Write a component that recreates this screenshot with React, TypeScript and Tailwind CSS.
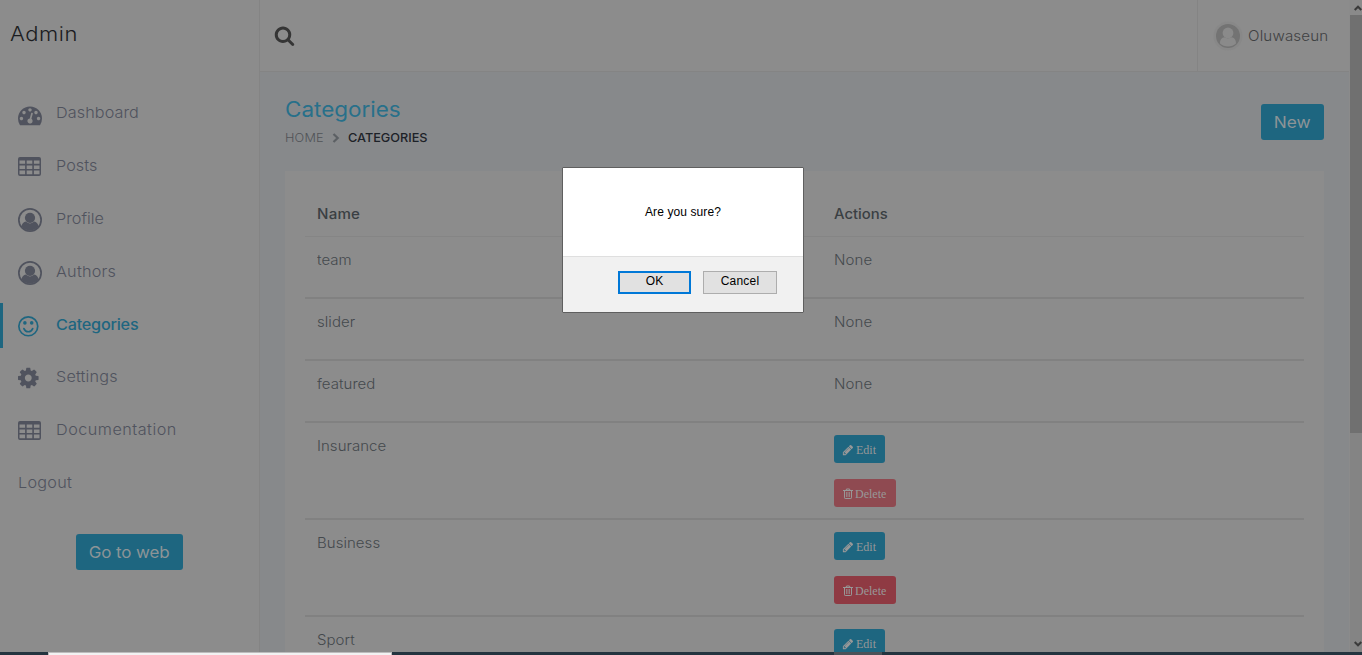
import type { ReactNode } from "react";

const DASH =
  "M384 1152q0-53-37.5-90.5t-90.5-37.5-90.5 37.5-37.5 90.5 37.5 90.5 90.5 37.5 90.5-37.5 37.5-90.5zm192-448q0-53-37.5-90.5t-90.5-37.5-90.5 37.5-37.5 90.5 37.5 90.5 90.5 37.5 90.5-37.5 37.5-90.5zm428 481l101-382q6-26-7.5-48.5t-38.5-29.5-48 6.5-30 39.5l-101 382q-60 5-107 43.5t-63 98.5q-20 77 20 146t117 89 146-20 89-117q16-60-6-117t-72-91zm660-33q0-53-37.5-90.5t-90.5-37.5-90.5 37.5-37.5 90.5 37.5 90.5 90.5 37.5 90.5-37.5 37.5-90.5zm-640-640q0-53-37.5-90.5t-90.5-37.5-90.5 37.5-37.5 90.5 37.5 90.5 90.5 37.5 90.5-37.5 37.5-90.5zm448 192q0-53-37.5-90.5t-90.5-37.5-90.5 37.5-37.5 90.5 37.5 90.5 90.5 37.5 90.5-37.5 37.5-90.5zm320 448q0 261-141 483-19 29-54 29h-1402q-35 0-54-29-141-221-141-483 0-182 71-348t191-286 286-191 348-71 348 71 286 191 191 286 71 348z";
const COG =
  "M1152 896q0-106-75-181t-181-75-181 75-75 181 75 181 181 75 181-75 75-181zm512-109v222q0 12-8 23t-20 13l-185 28q-19 54-39 91 35 50 107 138 10 12 10 25t-9 23q-27 37-99 108t-94 71q-12 0-26-9l-138-108q-44 23-91 38-16 136-29 186-7 28-36 28h-222q-14 0-24.5-8.5t-11.5-21.5l-28-184q-49-16-90-37l-141 107q-10 9-25 9-14 0-25-11-126-114-165-168-7-10-7-23 0-12 8-23 15-21 51-66.5t54-70.5q-27-50-41-99l-183-27q-13-2-21-12.5t-8-23.5v-222q0-12 8-23t19-13l186-28q14-46 39-92-40-57-107-138-10-12-10-24 0-10 9-23 26-36 98.5-107.5t94.5-71.5q13 0 26 10l138 107q44-23 91-38 16-136 29-186 7-28 36-28h222q14 0 24.5 8.5t11.5 21.5l28 184q49 16 90 37l142-107q9-9 24-9 13 0 25 10 129 119 165 170 7 8 7 22 0 12-8 23-15 21-51 66.5t-54 70.5q26 50 41 98l183 28q13 2 21 12.5t8 23.5z";
const SEARCH =
  "M1216 832q0-185-131.5-316.5t-316.5-131.5-316.5 131.5-131.5 316.5 131.5 316.5 316.5 131.5 316.5-131.5 131.5-316.5zm512 832q0 52-38 90t-90 38q-54 0-90-38l-343-342q-179 124-399 124-143 0-273.5-55.5t-225-150-150-225-55.5-273.5 55.5-273.5 150-225 225-150 273.5-55.5 273.5 55.5 225 150 150 225 55.5 273.5q0 220-124 399l343 343q37 37 37 90z";
const PENCIL =
  "M491 1536l91-91-235-235-91 91v107h128v128h107zm523-928q0-22-22-22-10 0-17 7l-542 542q-7 7-7 17 0 22 22 22 10 0 17-7l542-542q7-7 7-17zm-54-192l416 416-832 832h-416v-416zm683 96q0 53-37 90l-166 166-416-416 166-165q36-38 90-38 53 0 91 38l235 234q37 39 37 91z";

function DashIcon() {
  return (
    <svg className="mt-0.5 size-6" viewBox="0 0 1792 1792" fill="currentColor">
      <path d={DASH} />
    </svg>
  );
}

function CogIcon() {
  return (
    <svg className="size-6" viewBox="128 0 1792 1792" fill="currentColor">
      <path d={COG} />
    </svg>
  );
}

function TableIcon() {
  return (
    <svg className="-mt-px size-6" viewBox="0 0 24 24" fill="currentColor">
      <path
        fillRule="evenodd"
        d="M2 3h19a2 2 0 0 1 2 2v15a2 2 0 0 1-2 2H2a2 2 0 0 1-2-2V5a2 2 0 0 1 2-2zM1.500 6.500v3.300h5.600v-3.300zM8.700 6.500v3.300h5.600v-3.300zM15.900 6.500v3.300h5.600v-3.300zM1.500 11.400v3.500h5.600v-3.500zM8.700 11.400v3.500h5.600v-3.500zM15.900 11.400v3.500h5.600v-3.500zM1.500 16.500v3.700h5.600v-3.700zM8.700 16.500v3.700h5.600v-3.700zM15.900 16.500v3.700h5.600v-3.700z"
      />
    </svg>
  );
}

function UserIcon() {
  return (
    <svg className="mt-px size-6" viewBox="0 0 24 24">
      <circle cx="12" cy="12" r="11.15" fill="none" stroke="currentColor" strokeWidth="1.7" />
      <circle cx="12" cy="9.800" r="5.1" fill="currentColor" />
      <path d="M3.6 18.4c.5-3 2-4.5 4.3-4.8 2.5 2.4 5.700 2.400 8.200 0 2.300.3 3.800 1.800 4.300 4.800a10.600 10.600 0 0 1-16.800 0z" fill="currentColor" />
    </svg>
  );
}

function SmileIcon() {
  return (
    <svg className="mt-px size-6" viewBox="0 0 24 24">
      <g fill="none" stroke="currentColor" strokeWidth="1.7">
        <circle cx="10.3" cy="12.300" r="9.45" />
        <path d="M5.900 14.600c1.700 4.200 7.100 4.200 8.800 0" strokeLinecap="round" />
      </g>
      <circle cx="6.900" cy="8.900" r="1.800" fill="currentColor" />
      <circle cx="13.700" cy="8.900" r="1.800" fill="currentColor" />
    </svg>
  );
}

const nav: { label: string; icon: ReactNode; cls: string }[] = [
  { label: "Dashboard", icon: <DashIcon />, cls: "tracking-[0.08px]" },
  { label: "Posts", icon: <TableIcon />, cls: "tracking-[0.05px]" },
  { label: "Profile", icon: <UserIcon />, cls: "tracking-[0.02px]" },
  { label: "Authors", icon: <UserIcon />, cls: "tracking-[0.2px]" },
  { label: "Categories", icon: <SmileIcon />, cls: "tracking-[-0.2px]" },
  { label: "Settings", icon: <CogIcon />, cls: "tracking-[0.15px]" },
  { label: "Documentation", icon: <TableIcon />, cls: "tracking-[0.45px]" },
];

const rows = [
  { name: "team", editable: false, faded: false },
  { name: "slider", editable: false, faded: false },
  { name: "featured", editable: false, faded: false },
  { name: "Insurance", editable: true, faded: true },
  { name: "Business", editable: true, faded: false },
  { name: "Sport", editable: true, faded: false },
];

function Sidebar() {
  return (
    <aside className="w-[260px] shrink-0 border-r border-[#848484] text-[15px] font-light text-[#50535e]">
      <div className="flex h-[68px] items-center pl-2.5 text-[20px] text-[#1b1c1f]">
        <span className="origin-left scale-x-[1.1] tracking-[0.5px]">Admin</span>
      </div>
      <nav className="mt-[23.8px] flex flex-col gap-2">
        {nav.map((n) => {
          const active = n.label === "Categories";
          return (
            <a
              key={n.label}
              className={
                active
                  ? "flex h-[44.8px] items-center border-l-[3px] border-[#1e6680] pl-[15px] font-medium text-[#1e6680]"
                  : "flex h-[44.8px] items-center pl-[18px]"
              }
            >
              {n.icon}
              <span className={"-mt-px ml-3.5 origin-left scale-x-[1.08] " + n.cls}>{n.label}</span>
            </a>
          );
        })}
        <a className="flex h-[44.8px] items-center pl-[18px]">
          <span className="-mt-px origin-left scale-x-[1.08] tracking-[0.25px]">Logout</span>
        </a>
      </nav>
      <div className="mt-7 flex justify-center">
        <button className="flex h-9 w-[107px] items-center justify-center rounded-[3px] bg-[#1e6680] text-[16px] font-normal text-[#8c9497]">
          <span className="scale-x-[1.06] tracking-[-0.1px]">Go to web</span>
        </button>
      </div>
    </aside>
  );
}

function Header() {
  return (
    <header className="flex h-[72px] shrink-0 items-center border-b border-[#848484] bg-[#8c8c8c] pl-[14px]">
      <svg className="size-[21px] text-[#353535]" viewBox="0 0 1792 1792" fill="currentColor">
        <path d={SEARCH} />
      </svg>
      <div className="ml-auto flex h-full w-[153px] items-center border-l border-[#848484] pl-[15px]">
        <svg className="size-[30px] shrink-0" viewBox="0 0 30 30">
          <circle cx="15" cy="15" r="14.500" fill="#888888" />
          <circle cx="15" cy="15" r="12" fill="#737373" />
          <circle cx="15" cy="12" r="5.400" fill="#8a8a8a" />
          <path d="M7 22.500c0-4 2-6 4.400-6.200 2.300 1.500 4.900 1.500 7.200 0 2.400.2 4.400 2.200 4.400 6.200-4 4-12 4-16 0z" fill="#8a8a8a" />
        </svg>
        <span className="ml-[5px] origin-left scale-x-[1.08] text-[14px] font-light tracking-[0.15px] text-[#3f4143]">
          Oluwaseun
        </span>
      </div>
    </header>
  );
}

function Actions({ faded }: { faded: boolean }) {
  return (
    <div className="flex flex-col items-start gap-4 pt-3 font-['Liberation_Serif',serif] text-[12px] text-[#989898]">
      <button className="flex h-7 w-[51px] items-center rounded-[3px] bg-[#1e6680] pt-0.5 pl-2">
        <svg className="mr-0.5 size-3" viewBox="0 0 1792 1792" fill="currentColor">
          <path d={PENCIL} />
        </svg>
        Edit
      </button>
      <button
        className={
          faded
            ? "flex h-7 w-[62px] items-center rounded-[3px] bg-[#8f4a51] pt-0.5 pl-[9px]"
            : "flex h-7 w-[62px] items-center rounded-[3px] bg-[#8f3a43] pt-0.5 pl-[9px]"
        }
      >
        <svg className="-mt-px mr-[2px] h-[11px] w-[10px]" viewBox="0 0 10 11" fill="none" stroke="currentColor">
          <path d="M0 2.500h10M3 2.500l.5-1.500h3l.5 1.500M1.500 2.500v7.300q0 .7.700.7h5.600q.7 0 .7-.7v-7.300" />
          <path d="M3.500 4v5M5 4v5M6.500 4v5" strokeWidth="0.700" />
        </svg>
        Delete
      </button>
    </div>
  );
}

function Content() {
  return (
    <main className="min-h-0 flex-1 overflow-hidden bg-[#87898b] pr-[26px] pl-[25px]">
      <div className="flex h-[99px] justify-between">
        <div className="pt-[23px]">
          <h1 className="w-max origin-left scale-x-[1.07] text-[21px] leading-[30px] font-normal text-[#27708a]">Categories</h1>
          <div className="mt-1 flex h-[18px] items-center text-[12px] leading-[18px]">
            <span className="w-[39px] origin-left scale-x-[1.06] font-light tracking-[0.15px] text-[#505357]">HOME</span>
            <svg className="mx-2 h-[10px] w-2 shrink-0" viewBox="0 0 8 10" fill="none" stroke="#5c6064" strokeWidth="2.200">
              <path d="M1.500 1l4.200 4-4.200 4" />
            </svg>
            <span className="origin-left scale-x-[1.06] font-medium tracking-[-0.03px] text-[#1d2228]">CATEGORIES</span>
          </div>
        </div>
        <button className="mt-8 flex h-9 w-[63px] items-center justify-center rounded-[3px] bg-[#1e6680] text-[16px] text-[#8c9497]">
          <span className="scale-x-[1.08]">New</span>
        </button>
      </div>
      <section className="h-[600px] bg-[#8c8c8c] px-5 pt-5 text-[14px] text-[#44494d]">
        <div className="grid h-[46px] grid-cols-[517px_1fr] items-center border-b border-[#858585] pl-3 font-medium text-[#3a3f43]">
          <span className="w-max origin-left scale-x-[1.08] tracking-[0.2px]">Name</span>
          <span className="w-max origin-left scale-x-[1.06]">Actions</span>
        </div>
        {rows.map((r) => (
          <div
            key={r.name}
            className={
              r.editable
                ? "grid h-[97px] grid-cols-[517px_1fr] border-b-2 border-[#818181] pl-3"
                : "grid h-[62px] grid-cols-[517px_1fr] border-b-2 border-[#818181] pl-3"
            }
          >
            <span className="mt-[13px] h-5 w-max origin-left scale-x-[1.07] leading-5 font-light tracking-[0.05px]">{r.name}</span>
            {r.editable ? (
              <Actions faded={r.faded} />
            ) : (
              <span className="mt-[13px] h-5 w-max origin-left scale-x-[1.07] leading-5 font-light tracking-[0.15px]">None</span>
            )}
          </div>
        ))}
      </section>
    </main>
  );
}

function Scrollbar() {
  return (
    <div className="flex w-[13px] shrink-0 flex-col border-l border-[#8b8b8b] bg-[#848484]">
      <div className="flex h-[15px] items-center justify-end bg-[#8a8a8a]">
        <svg className="h-[6px] w-2" viewBox="0 0 8 6" fill="none" stroke="#3a3a3a" strokeWidth="2">
          <path d="M0.700 5l3.300-3.300L7.300 5" />
        </svg>
      </div>
      <div className="h-[418px] bg-[#707070]" />
      <div className="mt-auto flex h-[17px] items-center justify-end">
        <svg className="h-[6px] w-2" viewBox="0 0 8 6" fill="none" stroke="#3a3a3a" strokeWidth="2">
          <path d="M0.700 1l3.300 3.300L7.300 1" />
        </svg>
      </div>
    </div>
  );
}

function ConfirmDialog() {
  return (
    <div className="absolute top-[167px] left-[562px] flex h-[146px] w-[242px] flex-col rounded-[1px] border border-[#5f5f5f] bg-white font-['Liberation_Sans',sans-serif] text-[12px] text-black">
      <div className="flex h-[88px] items-center justify-center">
        <span className="tracking-[0.1px]">Are you sure?</span>
      </div>
      <div className="flex flex-1 justify-end gap-3 border-t border-[#dfdfdf] bg-[#f1f1f1] pt-[14px] pr-[26px]">
        <button className="h-[23px] w-[73px] border-2 border-[#0078d7] bg-[#e1e1e1] leading-[17px]">
          <span className="block -translate-y-px">OK</span>
        </button>
        <button className="h-[23px] w-[74px] border border-[#adadad] bg-[#e1e1e1] leading-[19px] tracking-[0.2px]">
          <span className="block -translate-y-px">Cancel</span>
        </button>
      </div>
    </div>
  );
}

export default function App() {
  return (
    <div className="relative flex h-[655px] w-[1362px] flex-col overflow-hidden bg-[#8c8c8c] font-[Inter,sans-serif]">
      <div className="flex h-[652px] shrink-0 overflow-hidden">
        <Sidebar />
        <div className="-mr-px flex min-w-0 flex-1 flex-col">
          <Header />
          <Content />
        </div>
        <Scrollbar />
      </div>
      <div className="flex h-[3px] bg-[#24343f]">
        <div className="ml-12 w-[344px] border-t border-r border-l border-[#bcbcbc] bg-[#f2f2f2]" />
        <div className="ml-[442px] w-12 bg-[#4c5258]" />
      </div>
      <ConfirmDialog />
    </div>
  );
}
